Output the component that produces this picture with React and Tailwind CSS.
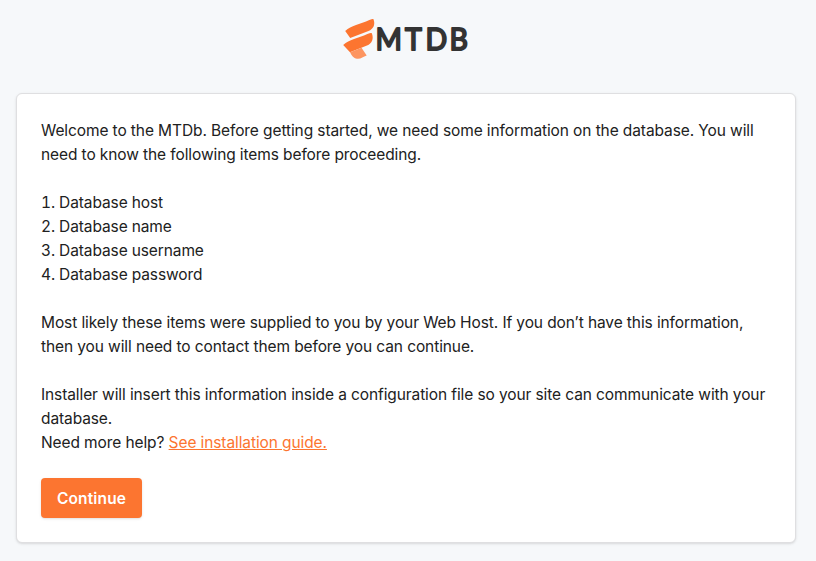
import React from 'react';

const requiredItems = [
  'Database host',
  'Database name',
  'Database username',
  'Database password',
];

const Logo = () => (
  <svg className="block" width="136" height="42" viewBox="-4 0 136 42" role="img">
    <path d="M3.2 13C6.5 10 9.5 8.8 14 7L24 3.5C28 2 30 .5 31.5 1.2C33.5 6.5 31.5 11 26.5 13L8.2 20Z" fill="#fc7530" />
    <path d="M1.2 27C4.5 24 7.5 22.8 12 21L22 17.5C26 16 28 14.5 29.8 15.2C32 20.5 30 25.5 25 27.5L8 34.2Z" fill="#fc7530" />
    <path d="M8 34.2 19.5 29.8 24.7 37.5C21 38.5 19 41.3 15 40.8C11.5 40.4 9.5 37 8 34.2Z" fill="#fd9560" />
    <text
      x="35.3 66.2 88 113.2"
      y="31.8"
      transform="scale(0.95 1)"
      className="fill-[#333333] stroke-[#333333] font-[Lato,sans-serif] text-[30px] font-normal tracking-normal"
      strokeWidth="1.9"
      strokeLinejoin="round"
    >
      MTDB
    </text>
  </svg>
);

const App = () => {
  return (
    <div className="min-h-screen bg-[#f6f8fa] pl-4 pr-5 pt-[18px] font-[Inter,sans-serif] text-[15.5px] leading-6 tracking-[-0.1px] text-[#212121]">
      <header className="mb-[33px] flex justify-center">
        <Logo />
      </header>

      <main className="h-[450px] rounded-md border border-[#dfdfe1] bg-white px-6 pb-6 pt-[25px] shadow-sm">
        <p>
          Welcome to the MTDb. Before getting started, we need some information on the database. You will
          <br />
          need to know the following items before proceeding.
        </p>

        <ol className="my-6 tabular-nums">
          {requiredItems.map((item, index) => (
            <li key={item}>
              {index + 1}. {item}
            </li>
          ))}
        </ol>

        <p className="mb-6">
          Most likely these items were supplied to you by your Web Host. If you don’t have this information,
          <br />
          then you will need to contact them before you can continue.
        </p>

        <p>
          Installer will insert this information inside a configuration file so your site can communicate with your
          <br />
          database.
        </p>
        <p>
          Need more help?{' '}
          <a href="#guide" className="text-[#fc7530] underline">
            See installation guide.
          </a>
        </p>

        <button
          type="button"
          className="mt-[23px] flex h-10 w-[101px] items-center justify-center rounded bg-[#fc7530] pt-0.5 font-semibold tracking-[0.15px] text-white shadow-sm"
        >
          Continue
        </button>
      </main>
    </div>
  );
};

export default App;
